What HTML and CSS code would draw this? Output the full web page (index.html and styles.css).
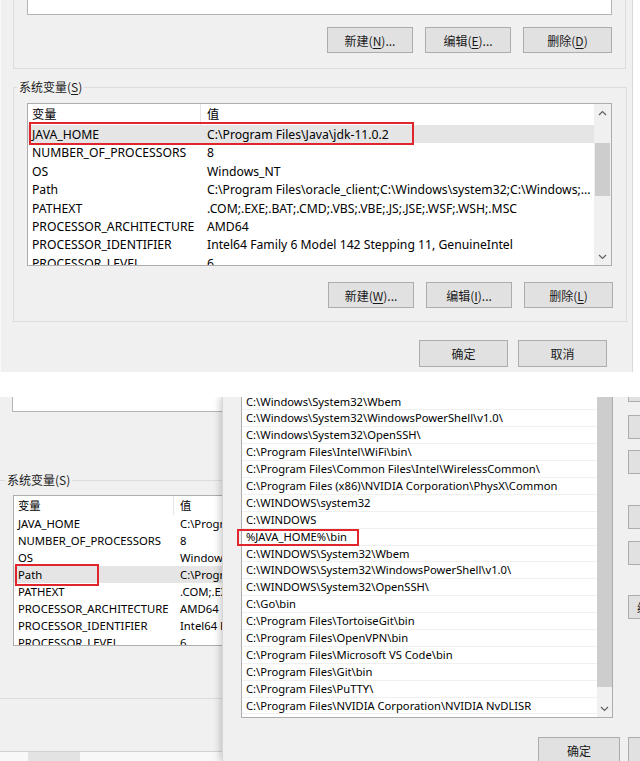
FILE: index.html
```html
<!DOCTYPE html>
<html lang="zh-CN">
<head>
    <meta charset="UTF-8">
    <meta name="viewport" content="width=device-width, initial-scale=1.0">
    <title>环境变量</title>
    <link rel="stylesheet" href="styles.css">
</head>
<body>

    <!-- Screenshot 1: environment variables dialog -->
    <div class="shot shot-top">
        <div class="group-user">
            <div class="textbox"></div>
            <div class="btn-row">
                <div class="btn">新建(<u>N</u>)...</div>
                <div class="btn">编辑(<u>E</u>)...</div>
                <div class="btn btn-wide">删除(<u>D</u>)</div>
            </div>
        </div>

        <fieldset class="group group-sys">
            <legend>系统变量(<u>S</u>)</legend>
            <div class="listview lv-top">
                <div class="lv-body">
                    <div class="lv-head"><span class="c1">变量</span><span class="c2">值</span></div>
                    <div class="lv-row sel"><span class="c1">JAVA_HOME</span><span class="c2">C:\Program Files\Java\jdk-11.0.2</span><div class="mark mark-java"></div></div>
                    <div class="lv-row"><span class="c1">NUMBER_OF_PROCESSORS</span><span class="c2">8</span></div>
                    <div class="lv-row"><span class="c1">OS</span><span class="c2">Windows_NT</span></div>
                    <div class="lv-row"><span class="c1">Path</span><span class="c2">C:\Program Files\oracle_client;C:\Windows\system32;C:\Windows;...</span></div>
                    <div class="lv-row"><span class="c1">PATHEXT</span><span class="c2">.COM;.EXE;.BAT;.CMD;.VBS;.VBE;.JS;.JSE;.WSF;.WSH;.MSC</span></div>
                    <div class="lv-row"><span class="c1">PROCESSOR_ARCHITECTURE</span><span class="c2">AMD64</span></div>
                    <div class="lv-row"><span class="c1">PROCESSOR_IDENTIFIER</span><span class="c2">Intel64 Family 6 Model 142 Stepping 11, GenuineIntel</span></div>
                    <div class="lv-row"><span class="c1">PROCESSOR_LEVEL</span><span class="c2">6</span></div>
                </div>
                <div class="vscroll">
                    <div class="arrow"><svg width="9" height="6" viewBox="0 0 9 6"><polyline points="1,5 4.5,1.5 8,5" fill="none" stroke="#606060" stroke-width="1.2"/></svg></div>
                    <div class="track"><div class="thumb"></div></div>
                    <div class="arrow"><svg width="9" height="6" viewBox="0 0 9 6"><polyline points="1,1 4.5,4.5 8,1" fill="none" stroke="#606060" stroke-width="1.2"/></svg></div>
                </div>
            </div>
            <div class="btn-row">
                <div class="btn">新建(<u>W</u>)...</div>
                <div class="btn">编辑(<u>I</u>)...</div>
                <div class="btn btn-wide">删除(<u>L</u>)</div>
            </div>
        </fieldset>

        <div class="dlg-foot">
            <div class="btn btn-ok">确定</div>
            <div class="btn btn-ok">取消</div>
        </div>
    </div>

    <!-- Screenshot 2: Path edit dialog over the same window -->
    <div class="shot shot-bottom">
        <div class="pane-env">
            <div class="env-body">
                <div class="textbox textbox-small"></div>
                <fieldset class="group group-env">
                    <legend>系统变量(S)</legend>
                    <div class="listview lv-small">
                        <div class="lv-body">
                            <div class="lv-head"><span class="c1">变量</span><span class="c2">值</span></div>
                            <div class="lv-row"><span class="c1">JAVA_HOME</span><span class="c2">C:\Progra</span></div>
                            <div class="lv-row"><span class="c1">NUMBER_OF_PROCESSORS</span><span class="c2">8</span></div>
                            <div class="lv-row"><span class="c1">OS</span><span class="c2">Window</span></div>
                            <div class="lv-row sel"><span class="c1">Path</span><span class="c2">C:\Progra</span><div class="mark mark-path"></div></div>
                            <div class="lv-row"><span class="c1">PATHEXT</span><span class="c2">.COM;.EX</span></div>
                            <div class="lv-row"><span class="c1">PROCESSOR_ARCHITECTURE</span><span class="c2">AMD64</span></div>
                            <div class="lv-row"><span class="c1">PROCESSOR_IDENTIFIER</span><span class="c2">Intel64 F</span></div>
                            <div class="lv-row"><span class="c1">PROCESSOR_LEVEL</span><span class="c2">6</span></div>
                        </div>
                    </div>
                </fieldset>
            </div>
            <div class="env-under"><div class="under-block"></div></div>
        </div>

        <div class="pane-edit">
            <div class="edit-main">
                <div class="edit-list">
                    <div class="edit-rows">
                        <div class="edit-row">C:\Windows\System32\Wbem</div>
                        <div class="edit-row">C:\Windows\System32\WindowsPowerShell\v1.0\</div>
                        <div class="edit-row">C:\Windows\System32\OpenSSH\</div>
                        <div class="edit-row">C:\Program Files\Intel\WiFi\bin\</div>
                        <div class="edit-row">C:\Program Files\Common Files\Intel\WirelessCommon\</div>
                        <div class="edit-row">C:\Program Files (x86)\NVIDIA Corporation\PhysX\Common</div>
                        <div class="edit-row">C:\WINDOWS\system32</div>
                        <div class="edit-row">C:\WINDOWS</div>
                        <div class="edit-row">%JAVA_HOME%\bin<div class="mark mark-bin"></div></div>
                        <div class="edit-row">C:\WINDOWS\System32\Wbem</div>
                        <div class="edit-row">C:\WINDOWS\System32\WindowsPowerShell\v1.0\</div>
                        <div class="edit-row">C:\WINDOWS\System32\OpenSSH\</div>
                        <div class="edit-row">C:\Go\bin</div>
                        <div class="edit-row">C:\Program Files\TortoiseGit\bin</div>
                        <div class="edit-row">C:\Program Files\OpenVPN\bin</div>
                        <div class="edit-row">C:\Program Files\Microsoft VS Code\bin</div>
                        <div class="edit-row">C:\Program Files\Git\bin</div>
                        <div class="edit-row">C:\Program Files\PuTTY\</div>
                        <div class="edit-row">C:\Program Files\NVIDIA Corporation\NVIDIA NvDLISR</div>
                    </div>
                    <div class="vscroll vscroll-edit">
                        <div class="track"><div class="thumb"></div></div>
                        <div class="arrow"><svg width="9" height="6" viewBox="0 0 9 6"><polyline points="1,1 4.5,4.5 8,1" fill="none" stroke="#606060" stroke-width="1.2"/></svg></div>
                    </div>
                </div>
                <div class="side-btns">
                    <div class="btn side b1"></div>
                    <div class="btn side b2"></div>
                    <div class="btn side b3"></div>
                    <div class="btn side b4"></div>
                    <div class="btn side b5"></div>
                    <div class="btn side b6">编</div>
                </div>
            </div>
            <div class="edit-foot">
                <div class="btn btn-ok2">确定</div>
                <div class="btn btn-ok2"></div>
            </div>
        </div>
    </div>

</body>
</html>
```

FILE: styles.css
```css
* {
    box-sizing: border-box;
    margin: 0;
    padding: 0;
}
body {
    background: #fff;
    font-family: "Noto Sans", "Noto Sans CJK SC", sans-serif;
    font-size: 12px;
    color: #000;
    width: 640px;
    overflow: hidden;
}
u {
    text-decoration: underline;
    text-underline-offset: 2px;
}

/* shots */
.shot {
    background: #f0f0f0;
    overflow: hidden;
}
.shot-top {
    width: 633px;
    height: 372px;
    border-left: 1px solid #fafafa;
    border-right: 1px solid #d9d9d9;
}
.shot-bottom {
    margin-top: 25px;
    height: 364px;
    display: flex;
    background: #fff;
}

/* generic controls */
.textbox {
    background: #fff;
    border: 1px solid #b4b4b4;
    border-top: none;
    height: 15px;
}
.btn {
    height: 26px;
    background: #e1e1e1;
    border: 1px solid #adadad;
    display: flex;
    align-items: center;
    justify-content: center;
    font-family: "Noto Sans CJK SC", sans-serif;
    font-size: 12px;
    color: #1a1a1a;
    white-space: nowrap;
    flex-shrink: 0;
}
.btn-row {
    display: flex;
    justify-content: flex-end;
    gap: 12px;
}
.btn-row .btn {
    width: 86px;
}
.btn-row .btn-wide {
    width: 89px;
}

.group {
    border: 1px solid #dcdcdc;
    padding: 0;
    min-width: 0;
}
.group legend {
    font-family: "Noto Sans CJK SC", sans-serif;
    font-size: 12px;
    line-height: 16px;
    padding: 0 2px;
    color: #1a1a1a;
}

/* list view */
.listview {
    background: #fff;
    border: 1px solid #adadad;
    display: flex;
    overflow: hidden;
}
.lv-body {
    flex: 1;
    overflow: hidden;
    white-space: nowrap;
}
.lv-head,
.lv-row {
    display: flex;
    position: relative;
}
.lv-head .c1 {
    border-right: 1px solid #e5e5e5;
}
.lv-head span {
    font-family: "Noto Sans CJK SC", sans-serif;
}
.lv-row.sel {
    background: #e5e5e5;
}
.c1 {
    flex-shrink: 0;
    padding-left: 4px;
}
.c2 {
    padding-left: 6px;
}

.vscroll {
    width: 17px;
    background: #f0f0f0;
    display: flex;
    flex-direction: column;
    flex-shrink: 0;
}
.vscroll .arrow {
    height: 17px;
    display: flex;
    align-items: center;
    justify-content: center;
}
.vscroll .track {
    flex: 1;
    padding: 0 1px;
}
.vscroll .thumb {
    background: #cdcdcd;
}

/* red annotation boxes */
.mark {
    position: absolute;
    border: 2px solid #e0252c;
}

/* top screenshot */
.group-user {
    margin-left: 12px;
    width: 613px;
    height: 69px;
    border: 1px solid #dcdcdc;
    border-top: none;
}
.group-user .textbox {
    margin-left: 13px;
    width: 585px;
}
.group-user .btn-row {
    margin-top: 12px;
    padding-right: 13px;
}
.group-sys {
    margin: 10px 0 0 12px;
    width: 614px;
    padding-bottom: 13px;
}
.group-sys legend {
    margin-left: 3px;
}
.lv-top {
    margin: 8px 0 0 13px;
    width: 585px;
    height: 163px;
    font-size: 12.2px;
}
.lv-top .lv-head {
    height: 21px;
    line-height: 20px;
}
.lv-top .lv-row {
    height: 18.4px;
    line-height: 19px;
}
.lv-top .c1 {
    width: 173px;
}
.group-sys .btn-row {
    margin-top: 16px;
    padding-right: 13px;
}
.mark-java {
    left: 1px;
    top: -3px;
    width: 385px;
    height: 23px;
}
.vscroll .track .thumb {
    margin-top: 22px;
    height: 53px;
}
.dlg-foot {
    display: flex;
    gap: 10px;
    margin-top: 18px;
    padding-left: 418px;
}
.dlg-foot .btn-ok {
    width: 89px;
    height: 27px;
}

/* bottom screenshot: left window */
.pane-env {
    width: 222px;
    flex-shrink: 0;
    overflow: hidden;
}
.env-body {
    height: 355px;
    background: #f0f0f0;
    border-bottom: 1px solid #d2d2d2;
    overflow: hidden;
}
.textbox-small {
    margin-left: 12px;
    width: 240px;
}
.group-env {
    margin: 60px 0 0 -10px;
    width: 260px;
    height: 227px;
}
.group-env legend {
    margin-left: 14px;
}
.lv-small {
    margin: 7px 0 0 22px;
    width: 240px;
    height: 151px;
    font-size: 11.3px;
}
.lv-small .lv-head {
    height: 19px;
    line-height: 19px;
}
.lv-small .lv-row {
    height: 17px;
    line-height: 17px;
}
.lv-small .c1 {
    width: 160px;
}
.mark-path {
    left: 1px;
    top: -2px;
    width: 84px;
    height: 22px;
}
.env-under {
    height: 9px;
    background: #f8f8f8;
    padding-left: 28px;
}
.under-block {
    width: 52px;
    height: 9px;
    background: #e3e3e3;
}

/* bottom screenshot: edit dialog */
.pane-edit {
    width: 418px;
    flex-shrink: 0;
    background: #f0f0f0;
    border-left: 1px solid #d6d6d6;
    box-shadow: -3px 0 6px rgba(0, 0, 0, 0.16);
    position: relative;
    overflow: hidden;
}
.edit-main {
    display: flex;
    align-items: flex-start;
}
.edit-list {
    margin-left: 18px;
    width: 372px;
    height: 321px;
    background: #fff;
    border: 1px solid #adadad;
    border-top: none;
    display: flex;
    flex-shrink: 0;
}
.edit-rows {
    flex: 1;
    margin-top: -3.5px;
    font-size: 11.2px;
    white-space: nowrap;
}
.edit-row {
    position: relative;
    height: 16.9px;
    line-height: 16px;
    padding-left: 4px;
    border-bottom: 1px solid #f0f0f0;
}
.mark-bin {
    left: -5px;
    top: 0;
    width: 122px;
    height: 17px;
}
.vscroll-edit {
    width: 15px;
}
.vscroll-edit .track {
    padding: 0;
}
.vscroll-edit .track .thumb {
    margin-top: 0;
    height: 290px;
}
.side-btns {
    margin-left: 15px;
    width: 40px;
    flex-shrink: 0;
}
.btn.side {
    width: 40px;
    height: 24px;
}
.btn.b6 {
    justify-content: flex-start;
    padding-left: 8px;
}
.b1 { margin-top: -19px; }
.b2 { margin-top: 13px; }
.b3 { margin-top: 11px; }
.b4 { margin-top: 31px; }
.b5 { margin-top: 12px; }
.b6 { margin-top: 30px; }
.edit-foot {
    display: flex;
    gap: 8px;
    margin-top: 19px;
    padding-left: 315px;
}
.btn-ok2 {
    width: 82px;
    height: 26px;
}
```
